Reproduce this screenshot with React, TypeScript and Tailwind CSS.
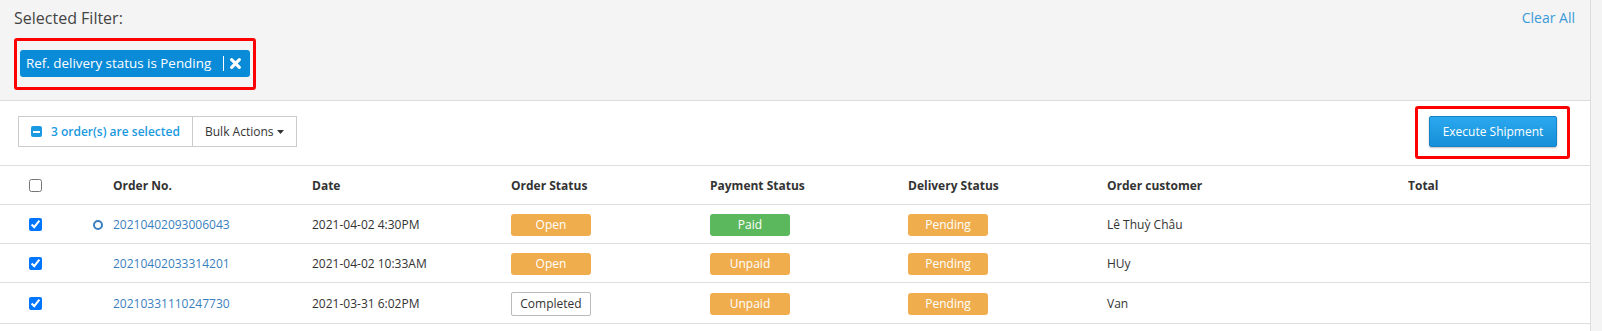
import React from "react";

const font = { fontFamily: '"Open Sans", "Noto Sans", sans-serif' };

function Badge({ label, kind }: { label: string; kind: "orange" | "green" | "outline" }) {
  if (kind === "outline") {
    return (
      <span className="inline-flex h-[24px] w-[80px] items-center justify-center rounded-[2px] border border-[#bbb] bg-white text-[12px] text-[#333]">
        {label}
      </span>
    );
  }
  return (
    <span
      className={
        kind === "green"
          ? "inline-flex h-[22px] w-[80px] items-center justify-center rounded-[3px] bg-[#5cb85c] text-[12px] text-white"
          : "inline-flex h-[22px] w-[80px] items-center justify-center rounded-[3px] bg-[#f0ad4e] text-[12px] text-white"
      }
    >
      {label}
    </span>
  );
}

const rows = [
  {
    no: "20210402093006043",
    date: "2021-04-02 4:30PM",
    order: { label: "Open", kind: "orange" as const },
    pay: { label: "Paid", kind: "green" as const },
    customer: "Lê Thuỳ Châu",
    dot: true,
  },
  {
    no: "20210402033314201",
    date: "2021-04-02 10:33AM",
    order: { label: "Open", kind: "orange" as const },
    pay: { label: "Unpaid", kind: "orange" as const },
    customer: "HUy",
    dot: false,
  },
  {
    no: "20210331110247730",
    date: "2021-03-31 6:02PM",
    order: { label: "Completed", kind: "outline" as const },
    pay: { label: "Unpaid", kind: "orange" as const },
    customer: "Van",
    dot: false,
  },
];

export default function App() {
  return (
    <div className="flex h-[331px] w-[1602px] overflow-hidden bg-white text-[#333]" style={font}>
      <div className="flex w-[1591px] flex-col border-r border-[#ddd]">
        {/* Selected filter area */}
        <div className="h-[101px] border-b border-[#ddd] bg-[#f4f4f4] pl-[14px] pr-[15px]">
          <div className="flex items-center justify-between pt-[7px]">
            <span className="text-[16px] leading-[22px] text-[#444]">Selected Filter:</span>
            <span className="text-[14px] leading-[22px] text-[#3a9ad9]">Clear All</span>
          </div>
          <div className="pl-[6px] pt-[21px]">
            <div className="relative inline-flex">
              <div className="flex h-[27px] w-[230px] items-center rounded-[3px] bg-[#0a8bd8] pl-[6px] text-[13.4px] text-white">
                <span>Ref. delivery status is Pending</span>
                <span className="ml-[12px] h-[15px] w-px bg-white" />
                <svg className="ml-[6px]" width="11" height="11" viewBox="0 0 10 10">
                  <path d="M1.5 1.5 L8.5 8.5 M8.5 1.5 L1.5 8.5" stroke="white" strokeWidth="2.8" strokeLinecap="round" />
                </svg>
              </div>
              <div className="pointer-events-none absolute left-[-6px] right-[-6px] top-[-12px] bottom-[-13px] rounded-[3px] border-[3px] border-[#f00]" />
            </div>
          </div>
        </div>

        {/* Actions bar */}
        <div className="flex h-[65px] items-start justify-between border-b border-[#ddd] pl-[18px] pr-[33px] pt-[15px]">
          <div className="flex h-[31px] items-stretch border border-[#ccc] text-[12px]">
            <div className="flex w-[174px] items-center border-r border-[#ccc] pl-[12px]">
              <span className="flex h-[11px] w-[11px] items-center justify-center rounded-[2px] bg-[#1a9ae0]">
                <span className="h-[2px] w-[7px] bg-white" />
              </span>
              <span className="ml-[9px] font-semibold text-[#1a9ae0]">3 order(s) are selected</span>
            </div>
            <div className="flex w-[103px] items-center pl-[12px] text-[#333]">
              <span>Bulk Actions</span>
              <svg className="ml-[3px]" width="7" height="4" viewBox="0 0 7 4">
                <path d="M0 0 L7 0 L3.5 4 Z" fill="#333" />
              </svg>
            </div>
          </div>
          <div className="relative">
            <button className="flex h-[31px] w-[128px] items-center justify-center rounded-[2px] border border-[#1582c8] bg-gradient-to-b from-[#2aa8ef] to-[#1590d8] text-[12px] text-white shadow-[0_1px_2px_rgba(0,0,0,0.25)]">
              Execute Shipment
            </button>
            <div className="pointer-events-none absolute left-[-14px] right-[-13px] top-[-10px] bottom-[-12px] rounded-[3px] border-[3px] border-[#f00]" />
          </div>
        </div>

        {/* Table */}
        <div className="flex h-[39px] items-center border-b border-[#ddd] pt-[1px] text-[12px] font-bold text-[#333]">
          <div className="w-[113px] pl-[29px]">
            <input type="checkbox" className="m-0 block h-[13px] w-[13px]" readOnly />
          </div>
          <div className="w-[199px]">Order No.</div>
          <div className="w-[199px]">Date</div>
          <div className="w-[199px]">Order Status</div>
          <div className="w-[198px]">Payment Status</div>
          <div className="w-[199px]">Delivery Status</div>
          <div className="w-[301px]">Order customer</div>
          <div>Total</div>
        </div>
        {rows.map((r, i) => (
          <div
            key={r.no}
            className={
              i === 2
                ? "flex h-[41px] items-center border-b border-[#ddd] pt-[1px] text-[12px]"
                : "flex h-[39px] items-center border-b border-[#ddd] pt-[1px] text-[12px]"
            }
          >
            <div className="flex w-[113px] items-center pl-[29px]">
              <input type="checkbox" defaultChecked className="m-0 block h-[13px] w-[13px]" readOnly />
              {r.dot ? (
                <span className="ml-[51px] h-[10px] w-[10px] rounded-full border-[2px] border-[#3a7fc0]" />
              ) : null}
            </div>
            <div className="w-[199px] text-[#3a7fc0]">{r.no}</div>
            <div className="w-[199px]">{r.date}</div>
            <div className="w-[199px]">
              <Badge label={r.order.label} kind={r.order.kind} />
            </div>
            <div className="w-[198px]">
              <Badge label={r.pay.label} kind={r.pay.kind} />
            </div>
            <div className="w-[199px]">
              <Badge label="Pending" kind="orange" />
            </div>
            <div className="w-[301px]">{r.customer}</div>
            <div />
          </div>
        ))}
      </div>
      <div className="flex-1 bg-[#f4f4f4]" />
    </div>
  );
}
